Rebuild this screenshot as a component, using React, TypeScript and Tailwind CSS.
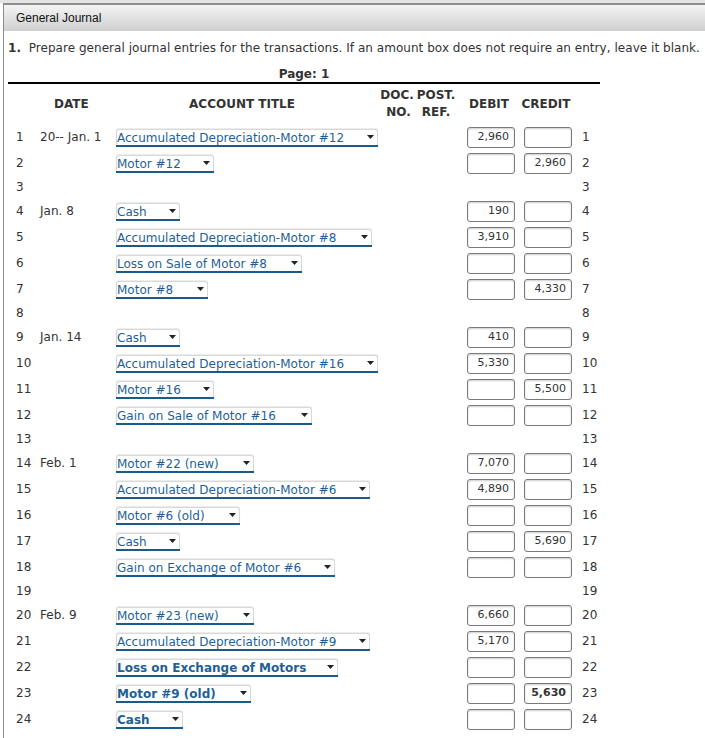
type Row = {
  date?: string;
  account?: string;
  w?: number;
  debit?: string;
  credit?: string;
  bold?: boolean;
  empty?: boolean;
};

const rows: Row[] = [
  { date: '20-- Jan. 1', account: 'Accumulated Depreciation-Motor #12', w: 262, debit: '2,960' },
  { account: 'Motor #12', w: 98, credit: '2,960' },
  { empty: true },
  { date: 'Jan. 8', account: 'Cash', w: 64, debit: '190' },
  { account: 'Accumulated Depreciation-Motor #8', w: 256, debit: '3,910' },
  { account: 'Loss on Sale of Motor #8', w: 186 },
  { account: 'Motor #8', w: 92, credit: '4,330' },
  { empty: true },
  { date: 'Jan. 14', account: 'Cash', w: 64, debit: '410' },
  { account: 'Accumulated Depreciation-Motor #16', w: 262, debit: '5,330' },
  { account: 'Motor #16', w: 98, credit: '5,500' },
  { account: 'Gain on Sale of Motor #16', w: 196 },
  { empty: true },
  { date: 'Feb. 1', account: 'Motor #22 (new)', w: 138, debit: '7,070' },
  { account: 'Accumulated Depreciation-Motor #6', w: 254, debit: '4,890' },
  { account: 'Motor #6 (old)', w: 124 },
  { account: 'Cash', w: 64, credit: '5,690' },
  { account: 'Gain on Exchange of Motor #6', w: 219 },
  { empty: true },
  { date: 'Feb. 9', account: 'Motor #23 (new)', w: 138, debit: '6,660' },
  { account: 'Accumulated Depreciation-Motor #9', w: 254, debit: '5,170' },
  { account: 'Loss on Exchange of Motors', w: 222, bold: true },
  { account: 'Motor #9 (old)', w: 135, bold: true, credit: '5,630' },
  { account: 'Cash', w: 67, bold: true },
];

const verdana = { fontFamily: '"DejaVu Sans", Verdana, sans-serif' };

function AccountSelect({ label, w, bold }: { label: string; w: number; bold?: boolean }) {
  return (
    <div
      className={`relative flex h-[16px] items-center rounded-t-[3px] border border-b-0 border-[#d8d8d8] bg-white shadow-[0_-1px_1px_rgba(0,0,0,0.08)] ${bold ? 'font-bold' : ''}`}
      style={{ width: w }}
    >
      <span className="whitespace-nowrap text-[12px] leading-none text-[#1f5f96]">{label}</span>
      <svg className="absolute right-[3px] top-[5px]" width="7" height="4" viewBox="0 0 7 4">
        <path d="M0 0h7L3.5 4z" fill="#222" />
      </svg>
      <div className="absolute -bottom-[2px] -left-px -right-px h-[2px] bg-[#1b5b8c]" />
    </div>
  );
}

function AmountBox({ value, bold }: { value?: string; bold?: boolean }) {
  return (
    <div className="flex h-[21px] w-[48px] items-center justify-end rounded-[3px] border border-[#7a7a7a] bg-white pr-[5px] shadow-[inset_0_1px_2px_rgba(0,0,0,0.2)]">
      <span className={`text-[11px] text-[#333] ${bold ? 'font-bold' : ''}`}>{value}</span>
    </div>
  );
}

export default function App() {
  return (
    <div className="min-h-screen bg-white" style={verdana}>
      <div className="h-[3px] bg-[#e3e3e3]" />
      <div className="ml-[3px] min-h-[735px] border-l border-t-2 border-[#8c8c8c]">
        <div
          className="flex h-[26px] items-center bg-gradient-to-b from-[#f4f4f4] to-[#cfcfcf] pl-[12px] text-[12px] text-[#111]"
          style={{ fontFamily: '"Liberation Sans", Arial, sans-serif' }}
        >
          General Journal
        </div>

        <div className="pl-[4px] pt-[8px] text-[12px] tracking-[0.04px] text-[#333]">
          <span className="font-bold">1.</span>&nbsp; Prepare general journal entries for the transactions. If an amount box does not require an entry, leave it blank.
        </div>

        <div className="ml-[4px] w-[592px]">
          <div className="pt-[10px] text-center text-[12px] font-bold leading-[14px] text-[#333]">Page: 1</div>
          <div className="mt-[1px] h-[2px] bg-black" />

          {/* header */}
          <div className="flex h-[40px] items-center text-[12px] font-bold text-[#333]">
            <div className="w-[96px] shrink-0 pl-[46px]">DATE</div>
            <div className="w-[276px] shrink-0 text-center">ACCOUNT TITLE</div>
            <div className="w-[34px] shrink-0 text-center leading-[17px]">
              DOC.
              <br />
              <span className="pl-[3px]">NO.</span>
            </div>
            <div className="w-[44px] shrink-0 text-center leading-[17px]">
              POST.
              <br />
              REF.
            </div>
            <div className="w-[62px] shrink-0 text-center">DEBIT</div>
            <div className="w-[52px] shrink-0 text-center">CREDIT</div>
          </div>

          {/* rows */}
          {rows.map((r, i) => (
            <div
              key={i}
              className={`flex items-center text-[12px] text-[#333] ${r.empty ? 'h-[22px]' : 'h-[26px]'}`}
            >
              <div className="w-[32px] pl-[8px]">{i + 1}</div>
              <div className="w-[76px] whitespace-nowrap">{r.date}</div>
              <div className="w-[351px]">
                {r.account && <AccountSelect label={r.account} w={r.w!} bold={r.bold} />}
              </div>
              <div className="w-[57px]">{!r.empty && <AmountBox value={r.debit} />}</div>
              <div className="w-[58px]">{!r.empty && <AmountBox value={r.credit} bold={r.bold} />}</div>
              <div className="flex-1">{i + 1}</div>
            </div>
          ))}
        </div>
      </div>
    </div>
  );
}
